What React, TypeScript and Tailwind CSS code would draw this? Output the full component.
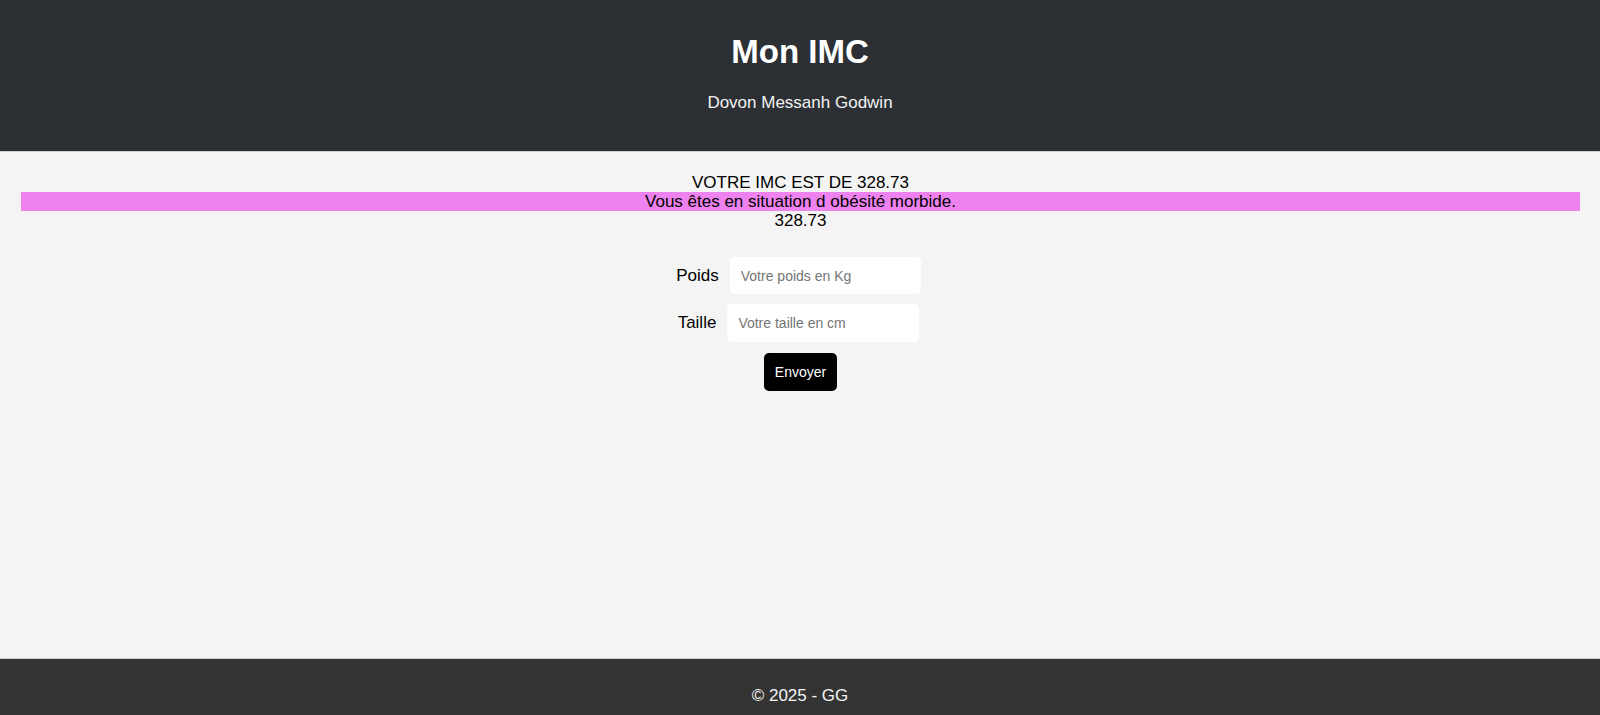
import { useState } from "react";

export default function App() {
  const [poids, setPoids] = useState("");
  const [taille, setTaille] = useState("");

  const imc = 328.73;

  return (
    <div
      className="flex min-h-screen flex-col bg-[#f4f4f4] text-black"
      style={{ fontFamily: '"Liberation Sans", Arial, sans-serif' }}
    >
      <header className="border-b border-[#d0d0d0] bg-[#2c3034] pt-[33px] pb-[38px] text-center text-white">
        <h1 className="text-[33px] leading-[38px] font-bold">Mon IMC</h1>
        <p className="mt-[22px] text-[17px] leading-[20px] text-[#f2f2f2]">
          Dovon Messanh Godwin
        </p>
      </header>

      <main className="flex-1 pt-[21px] pr-[20px] pl-[21px] text-center">
        <div className="text-[17px] leading-[19px]">VOTRE IMC EST DE {imc}</div>
        <div className="bg-[#ee82ee] text-[17px] leading-[19px]">
          Vous êtes en situation d obésité morbide.
        </div>
        <div className="text-[17px] leading-[19px]">{imc}</div>

        <form
          className="mt-[27px] flex flex-col items-center gap-[10px]"
          onSubmit={(e) => e.preventDefault()}
        >
          <div className="flex items-center gap-[11px] pr-[4px]">
            <label className="text-[17px]">Poids</label>
            <input
              className="h-[37px] w-[191px] rounded-[5px] bg-white px-[11px] text-[14px] outline-none placeholder:text-[#757575]"
              placeholder="Votre poids en Kg"
              value={poids}
              onChange={(e) => setPoids(e.target.value)}
            />
          </div>
          <div className="flex items-center gap-[11px] pr-[4px]">
            <label className="text-[17px]">Taille</label>
            <input
              className="h-[38px] w-[192px] rounded-[5px] bg-white px-[11px] text-[14px] outline-none placeholder:text-[#757575]"
              placeholder="Votre taille en cm"
              value={taille}
              onChange={(e) => setTaille(e.target.value)}
            />
          </div>
          <button
            type="submit"
            className="mt-[1px] h-[38px] rounded-[5px] bg-black px-[11px] text-[14px] text-white"
          >
            Envoyer
          </button>
        </form>
      </main>

      <footer className="h-[57px] border-t border-[#cfcfcf] bg-[#333333] pt-[27px] text-center text-[17px] leading-[19px] text-[#f4f4f4]">
        © 2025 - GG
      </footer>
    </div>
  );
}
